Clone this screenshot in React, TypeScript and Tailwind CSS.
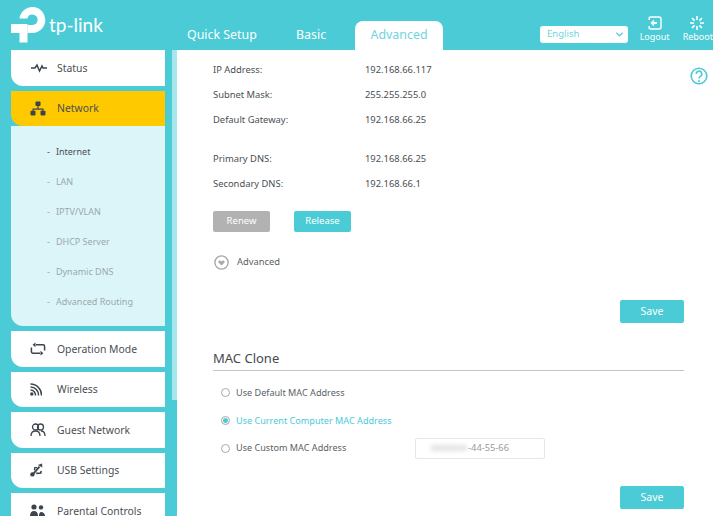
import { ChevronDown } from "lucide-react";

const font = "font-['Noto_Sans',sans-serif]";

function StatusIcon() {
  return (
    <svg width="18" height="12" viewBox="0 0 18 12" fill="none" stroke="#3c444c" strokeWidth="1.5">
      <path d="M1 6h4l2-3 2.5 6L12 4l1 2h4" />
    </svg>
  );
}

function NetworkIcon() {
  return (
    <svg width="16" height="15" viewBox="0 0 16 15" fill="#3c444c">
      <rect x="5.5" y="0.5" width="5" height="4.5" rx="0.8" />
      <path d="M7.4 5h1.2v2.5H13.5V10h-1.2V8.7H3.7V10H2.5V7.5h4.9z" />
      <rect x="0.5" y="9.8" width="5" height="4.6" rx="0.8" />
      <rect x="10.5" y="9.8" width="5" height="4.6" rx="0.8" />
    </svg>
  );
}

function ModeIcon() {
  return (
    <svg width="16" height="14" viewBox="0 0 16 14" fill="none" stroke="#3c444c" strokeWidth="1.5">
      <path d="M6 2.8h7a1.6 1.6 0 0 1 1.6 1.6v4" />
      <path d="M10 11.2H3a1.6 1.6 0 0 1-1.6-1.6v-4" />
      <path d="M5.5.4 2.6 2.8l2.9 2.4z" fill="#3c444c" stroke="none" />
      <path d="M10.5 8.8l2.9 2.4-2.9 2.4z" fill="#3c444c" stroke="none" />
    </svg>
  );
}

function WirelessIcon() {
  return (
    <svg width="12" height="13" viewBox="0 0 12 13" fill="none" stroke="#3c444c" strokeWidth="1.5">
      <path d="M0.5 1a11 11 0 0 1 11 11.5" />
      <path d="M0.5 4a8 8 0 0 1 8 8.5" />
      <path d="M0.5 7a5 5 0 0 1 5 5.5" />
      <circle cx="1.8" cy="11" r="1.7" fill="#3c444c" stroke="none" />
    </svg>
  );
}

function GuestIcon() {
  return (
    <svg width="16" height="14" viewBox="0 0 16 14" fill="none" stroke="#3c444c" strokeWidth="1.3">
      <circle cx="5.5" cy="4" r="3" />
      <circle cx="10.5" cy="4" r="3" />
      <path d="M1 13c0-3 1.8-5 4.5-5s4.5 2 4.5 5" />
      <path d="M11 8c2.4 0 4 2 4 5" />
    </svg>
  );
}

function UsbIcon() {
  return (
    <svg width="13" height="14" viewBox="0 0 13 14" fill="#3c444c">
      <circle cx="2.4" cy="11.4" r="2.2" />
      <path d="M2.8 10 8.8 3l1.4 1.2-6 7z" />
      <path d="M7.8 2 12 .4l.4 4z" />
      <path d="M3.8 7 4.2 4H7.4l-.8 1.2H5.4l-.2 2.4z" />
      <path d="M6 9.6l4-.2.4-1.6 1.6.4-.6 2.6-5 .4z" />
    </svg>
  );
}

function ParentalIcon() {
  return (
    <svg width="15" height="13" viewBox="0 0 15 13" fill="#3c444c">
      <circle cx="4" cy="3" r="2.6" />
      <circle cx="11" cy="3.4" r="2.2" />
      <path d="M0 12c0-3.5 1.6-5 4-5s4 1.5 4 5z" />
      <path d="M9 12c0-2.2.6-4 2.2-4S15 9.6 15 12z" />
    </svg>
  );
}

function Logo() {
  return (
    <svg width="36" height="36" viewBox="0 0 36 36" fill="white">
      <path d="M8.5 11.5V11a13 13 0 1 1 13 15h-5v-8h5a5.2 5.2 0 1 0-5-7v.5z" />
      <rect x="8.5" y="17" width="8" height="18.5" />
      <rect x="0" y="17" width="14" height="9" />
    </svg>
  );
}

const lower = [
  { name: "Operation Mode", icon: <ModeIcon /> },
  { name: "Wireless", icon: <WirelessIcon /> },
  { name: "Guest Network", icon: <GuestIcon /> },
  { name: "USB Settings", icon: <UsbIcon /> },
  { name: "Parental Controls", icon: <ParentalIcon /> },
];

const subItems = ["Internet", "LAN", "IPTV/VLAN", "DHCP Server", "Dynamic DNS", "Advanced Routing"];

function MenuItem({ name, icon, active }: { name: string; icon: React.ReactNode; active?: boolean }) {
  return (
    <div className={`flex items-center h-[35.5px] shrink-0 rounded-bl-xl ${active ? "bg-[#ffc900]" : "bg-white"}`}>
      <div className="w-[46px] pl-[19px] flex items-center">{icon}</div>
      <span className="text-[10.4px] pt-[2px] text-[#4a4f55]">{name}</span>
    </div>
  );
}

function InfoRow({ label, value }: { label: string; value: string }) {
  return (
    <div className="flex items-center h-[25px] text-[9.4px] text-[#4a4f55]">
      <span className="w-[152px]">{label}</span>
      <span>{value}</span>
    </div>
  );
}

function Radio({ label, checked }: { label: string; checked?: boolean }) {
  return (
    <div className="flex items-center gap-[6px]">
      <span className="w-[9px] h-[9px] rounded-full border border-[#a9a9a9] flex items-center justify-center bg-white shrink-0">
        {checked && <span className="w-[5px] h-[5px] rounded-full bg-[#4acbd6]" />}
      </span>
      <span className={`text-[9.1px] ${checked ? "text-[#4acbd6]" : "text-[#5a5f65]"}`}>{label}</span>
    </div>
  );
}

export default function App() {
  return (
    <div className={`${font} w-[713px] h-[516px] overflow-hidden bg-[#4acbd6] flex flex-col relative`}>
      {/* Header */}
      <header className="h-[50px] shrink-0 flex items-end relative">
        <div className="w-[187px] shrink-0 pl-[11px] pb-[7px] flex items-end gap-[2px] self-stretch">
          <Logo />
          <span className="font-['Lato',sans-serif] text-white text-[19px] leading-[20px] pb-[8px]">tp-link</span>
        </div>
        <div className="flex items-end text-white text-[12.4px] h-[29px]">
          <span className="w-[109px] h-full flex items-center">Quick Setup</span>
          <span className="w-[59px] h-full flex items-center">Basic</span>
          <span className="w-[88px] h-full flex items-center justify-center bg-white rounded-t-lg text-[#6fd5de]">Advanced</span>
        </div>
        <div className="ml-[97px] mb-[7px] w-[89px] h-[17px] bg-white rounded-[3px] flex items-center justify-between pl-[7px] pr-[3px] text-[9.5px] text-[#6fd5de]">
          English
          <ChevronDown size={11} strokeWidth={3} color="#4acbd6" />
        </div>
        <div className="ml-[12px] w-[30px] mb-[7px] flex flex-col items-center text-white text-[9px] leading-[12px] shrink-0">
          <svg width="14" height="14" viewBox="0 0 14 14" fill="none" stroke="white" strokeWidth="1.4" className="mb-[1px]">
            <path d="M3 1h8a2 2 0 0 1 2 2v8a2 2 0 0 1-2 2H3" />
            <path d="M1.5 1h1.5M1.5 13h1.5M1.2 1v3M1.2 10v3" />
            <path d="M4 7h5" strokeWidth="1.8" />
            <path d="M6 4.5 3.5 7 6 9.5" strokeWidth="1.4" />
          </svg>
          Logout
        </div>
        <div className="ml-[13px] mb-[7px] flex flex-col items-start text-white text-[9px] leading-[12px] shrink-0">
          <svg width="14" height="14" viewBox="0 0 14 14" fill="none" stroke="white" strokeWidth="1.6" className="mb-[1px] ml-[7px]">
            <path d="M7 0v4M7 10v4M0 7h4M10 7h4M2 2l2.6 2.6M9.4 9.4 12 12M12 2 9.4 4.6M4.6 9.4 2 12" />
          </svg>
          Reboot
        </div>
      </header>

      <div className="flex flex-1 min-h-0">
        {/* Left Side */}
        <aside className="w-[172px] shrink-0 pl-[11px] pr-[7px] flex flex-col gap-[5px]">
          <MenuItem name="Status" icon={<StatusIcon />} />
          <div className="flex flex-col shrink-0">
            <MenuItem name="Network" icon={<NetworkIcon />} active />
            <div className="bg-[#dcf5f8] h-[200px] rounded-bl-xl pl-[36px] pt-[10.5px] text-[9px]">
              {subItems.map((s, i) => (
                <div key={s} className={`h-[30px] flex items-center gap-[6px] ${i === 0 ? "text-[#4a4f55]" : "text-[#9aa8ad]"}`}>
                  <span>-</span>
                  <span>{s}</span>
                </div>
              ))}
            </div>
          </div>
          {lower.map((m) => (
            <MenuItem key={m.name} name={m.name} icon={m.icon} />
          ))}
        </aside>
        <div className="w-[5px] shrink-0 h-[350px] bg-[#a5e7ec]" />

        {/* Right Side */}
        <main className="flex-1 bg-white pl-[36px] pr-[29px] pt-[7.5px] min-w-0">
          <InfoRow label="IP Address:" value="192.168.66.117" />
          <InfoRow label="Subnet Mask:" value="255.255.255.0" />
          <InfoRow label="Default Gateway:" value="192.168.66.25" />
          <div className="h-[14px]" />
          <InfoRow label="Primary DNS:" value="192.168.66.25" />
          <InfoRow label="Secondary DNS:" value="192.168.66.1" />
          <div className="flex gap-[24px] mt-[14.5px]">
            <button className="w-[57px] h-[21px] rounded-[2px] bg-[#b2b2b2] text-white text-[9.5px]">Renew</button>
            <button className="w-[57px] h-[21px] rounded-[2px] bg-[#4acbd6] text-white text-[9.5px]">Release</button>
          </div>
          <div className="flex items-center gap-[8px] mt-[23px] ml-[1px] text-[9.4px] text-[#5a5f65]">
            <svg width="15" height="15" viewBox="0 0 15 15">
              <circle cx="7.5" cy="7.5" r="6.6" fill="white" stroke="#a9a9a9" strokeWidth="1.4" />
              <path d="M7.5 10.6 4.5 7.6c-1-1.4 1.6-3 3-1.2 1.4-1.8 4-.2 3 1.2z" fill="#a9a9a9" />
            </svg>
            Advanced
          </div>
          <div className="flex justify-end mt-[30px]">
            <button className="w-[64px] h-[23px] rounded-[2px] bg-[#4acbd6] text-white text-[10.5px]">Save</button>
          </div>
          <h2 className="mt-[26px] text-[13px] leading-[18px] text-[#444a50] pb-[3px] border-b border-[#c4c4c4]">MAC Clone</h2>
          <div className="pl-[8px] mt-[15px] flex flex-col gap-[14px]">
            <Radio label="Use Default MAC Address" />
            <Radio label="Use Current Computer MAC Address" checked />
            <div className="flex items-center h-[14px]">
              <div className="w-[194px] shrink-0">
                <Radio label="Use Custom MAC Address" />
              </div>
              <div className="w-[130px] h-[21px] shrink-0 border border-[#e6e6e6] rounded-[2px] flex items-center justify-end pr-[35px] gap-[1px] text-[9.3px] text-[#9a9a9a]">
                <span className="w-[36px] h-[6px] bg-[#e4e4e4] blur-[2px]" />
                -44-55-66
              </div>
            </div>
          </div>
          <div className="flex justify-end mt-[31px]">
            <button className="w-[64px] h-[23px] rounded-[2px] bg-[#4acbd6] text-white text-[10.5px]">Save</button>
          </div>
        </main>
      </div>

      {/* help button sits over the page */}
      <svg width="18" height="18" viewBox="0 0 18 18" fill="none" className="absolute left-[690px] top-[67px]">
        <circle cx="9" cy="9" r="7.8" stroke="#4acbd6" strokeWidth="1.6" />
        <path d="M6.2 7a2.8 2.8 0 1 1 4.2 2.4C9.4 10 9 10.5 9 11.6" stroke="#4acbd6" strokeWidth="1.6" />
        <circle cx="9" cy="14" r="1" fill="#4acbd6" />
      </svg>
    </div>
  );
}
